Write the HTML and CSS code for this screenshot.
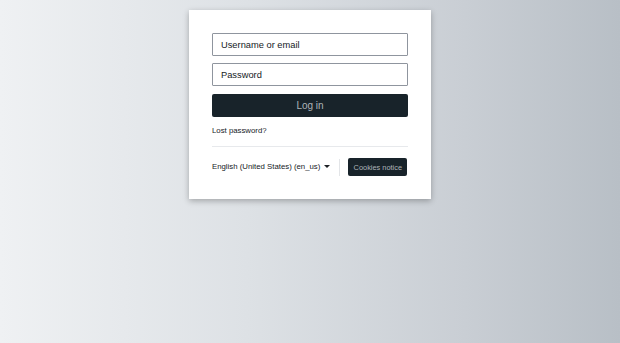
FILE: index.html
```html
<!DOCTYPE html>
<html lang="en">
<head>
  <meta charset="UTF-8" />
  <meta name="viewport" content="width=device-width, initial-scale=1.0" />
  <title>Log in</title>
  <link rel="stylesheet" href="styles.css">
</head>
<body>
  <div class="login-card">
    <form class="login-form">
      <input type="text" class="field" placeholder="Username or email" />
      <input type="password" class="field" placeholder="Password" />
      <button type="button" class="btn-login">Log in</button>
    </form>

    <a href="#" class="lost-link">Lost password?</a>

    <hr class="divider" />

    <div class="footer-row">
      <span class="lang-select">English (United States) (en_us) <span class="caret"></span></span>
      <span class="sep"></span>
      <button type="button" class="btn-cookies">Cookies notice</button>
    </div>
  </div>
</body>
</html>
```

FILE: styles.css
```css
* {
  box-sizing: border-box;
  margin: 0;
  padding: 0;
  font-family: "Liberation Sans", Arial, sans-serif;
}

body {
  min-height: 100vh;
  background: linear-gradient(to right, #eff1f3, #dde1e5 40%, #c9ced4 75%, #b8bfc6);
  display: flex;
  flex-direction: column;
  align-items: center;
  padding-top: 10px;
}

.login-card {
  width: 242px;
  background: #fff;
  padding: 23px;
  box-shadow: 0 2px 6px rgba(0, 0, 0, 0.28);
  display: flex;
  flex-direction: column;
}

.login-form {
  display: flex;
  flex-direction: column;
  gap: 7px;
}

.field {
  height: 23px;
  border: 1.5px solid #8f959e;
  border-radius: 1px;
  padding: 0 8px;
  font-size: 9.3px;
  color: #151a1e;
  outline: none;
}

.field::placeholder {
  color: #151a1e;
}

.btn-login {
  margin-top: 1px;
  height: 23px;
  border: none;
  border-radius: 2px;
  background: #18232a;
  color: #adb3b9;
  font-size: 10px;
}

.lost-link {
  margin-top: 9px;
  font-size: 7.8px;
  color: #151a1e;
  text-decoration: none;
  line-height: 10px;
}

.divider {
  margin-top: 10px;
  border: none;
  border-top: 1.5px solid #e7e9ec;
}

.footer-row {
  margin-top: 11px;
  display: flex;
  align-items: center;
}

.lang-select {
  font-size: 7.8px;
  color: #151a1e;
  display: flex;
  align-items: center;
  gap: 4px;
  margin-top: -1px;
}

.caret {
  width: 0;
  height: 0;
  border-left: 3px solid transparent;
  border-right: 3px solid transparent;
  border-top: 3px solid #1d2125;
}

.sep {
  width: 1px;
  height: 17px;
  background: #e3e5e8;
  margin: 0 8px 0 9px;
}

.btn-cookies {
  height: 18px;
  width: 59px;
  border: none;
  border-radius: 2px;
  background: #18232a;
  color: #adb3b9;
  font-size: 7.4px;
  white-space: nowrap;
}
```
